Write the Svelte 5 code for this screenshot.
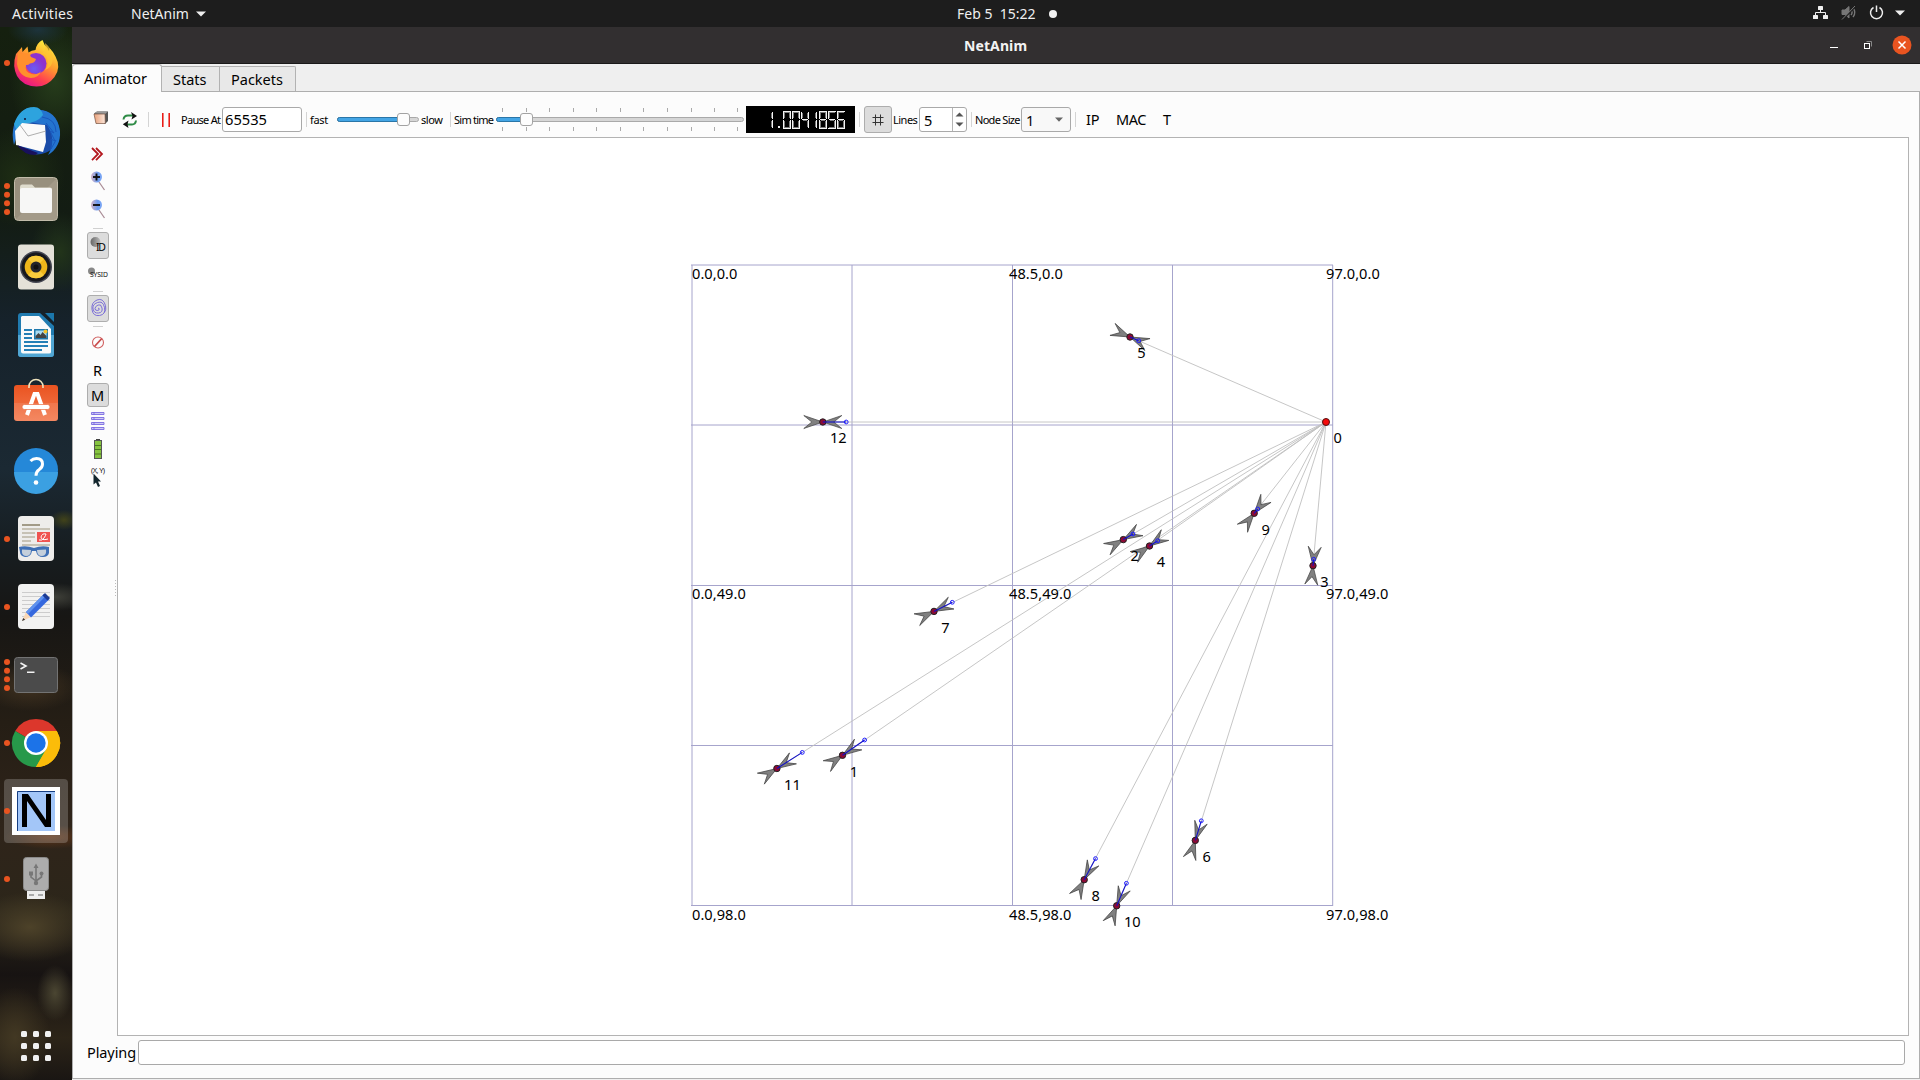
<script>
  // Positions on the animation canvas, in canvas pixels
  const OX = 118, OY = 138;
  const origin = { x: 1326, y: 422 };
  const nodes = [
    { id: 5, x: 1130, y: 337, ax: 1138.7, ay: 340.7 },
    { id: 12, x: 822.8, y: 422, ax: 846.2, ay: 422 },
    { id: 9, x: 1254.2, y: 513.3, ax: 1257.7, ay: 509 },
    { id: 2, x: 1123.3, y: 539.6, ax: 1133, ay: 534 },
    { id: 4, x: 1149.5, y: 546, ax: 1157.7, ay: 540.7 },
    { id: 3, x: 1313, y: 565.7, ax: 1313.7, ay: 559.3 },
    { id: 7, x: 934, y: 611.4, ax: 952.3, ay: 602.3 },
    { id: 11, x: 776.9, y: 768.5, ax: 802.3, ay: 752.4 },
    { id: 1, x: 842.5, y: 755.3, ax: 864.6, ay: 740 },
    { id: 8, x: 1084.2, y: 879.7, ax: 1095.5, ay: 858.6 },
    { id: 10, x: 1116.7, y: 905.8, ax: 1126.4, ay: 883.3 },
    { id: 6, x: 1195.3, y: 840.4, ax: 1201.3, ay: 820.8 }
  ].map((n) => ({ ...n, rot: (Math.atan2(origin.y - n.y, origin.x - n.x) * 180) / Math.PI }));

  const gx = [692, 852, 1012.5, 1172.5, 1332.7];
  const gy = [265, 425, 585.5, 745.5, 905.5];
  const labels = [];
  [['0.0', 279], ['49.0', 599], ['98.0', 920]].forEach(([v, y]) =>
    [['0.0', 692], ['48.5', 1009], ['97.0', 1326]].forEach(([h, x]) => {
      const text = h + ',' + v;
      labels.push({ text, x, y, w: (text.length - 2) * 8.5 + 2.8 });
    })
  );

  const ticks = [502, 526, 549, 573, 596, 620, 643, 667, 691, 714, 737];

  // Seven-segment display: [bright edge, shaded edge] for segments a-g
  const seg = {
    a: ['M0 .5H8', 'M1 1.500H7'], b: ['M7.500 1V8', 'M6.500 2V7'], c: ['M7.500 9V17', 'M6.500 10V16'],
    d: ['M0 17.500H8', 'M1 16.500H7'], e: ['M.5 9V17', 'M1.500 10V16'], f: ['M.5 1V8', 'M1.500 2V7'], g: ['M1 8.500H7', 'M2 9.500H6']
  };
  const shapes = { 0: 'abcdef', 1: 'bc', 4: 'bcfg', 5: 'acdfg', 6: 'acdefg', 8: 'abcdefg' };
  const lcd = [['1', 19], ['0', 37], ['0', 46], ['4', 55], ['1', 63], ['8', 73], ['5', 82], ['6', 91]];

  const dock = [
    ['firefox', 1], ['thunderbird', 0], ['files', 4], ['rhythmbox', 0], ['writer', 0], ['software', 0], ['help', 0],
    ['evince', 1], ['gedit', 1], ['terminal', 4], ['chrome', 1], ['netanim', 1], ['usb', 1]
  ];
  const dots = (n) => Array.from({ length: n }, (_, i) => 34 + (i - (n - 1) / 2) * 8.7);
</script>

<div class="screen">
  <header class="topbar">
    <span class="activities">Activities</span>
    <span class="appname">NetAnim</span>
    <svg class="tri" width="10" height="6"><path d="M0 .5H10L5 5.5z" fill="#eee" /></svg>
    <span class="clock">Feb 5&nbsp; 15:22</span>
    <i class="notif"></i>
    <svg class="status" width="96" height="16" viewBox="0 0 96 16">
      <g fill="#f0f0f0">
        <rect x="5" y="1" width="5" height="4" rx=".6" /><rect x="0" y="10" width="5" height="4" rx=".6" /><rect x="10" y="10" width="5" height="4" rx=".6" />
        <path d="M7.5 5V7.5M2.5 10V7.5H12.500V10" stroke="#f0f0f0" fill="none" />
        <path d="M82 5.500H92L87 10.500z" />
      </g>
      <g stroke="#777" fill="none"><path d="M29 5h3l4-3.500v11.500L32 9.500h-3z" fill="#777" /><path d="M38 5q2 2.500 0 5M40 3q3.500 4.500 0 9" stroke-width="1.500" /><path d="M30 14.500L43 1" stroke="#1d1d1d" stroke-width="1.500" /><path d="M29 14.500L42 1" /></g>
      <path d="M60.500 2.500a6 6 0 1 0 6 0M63.500 .5V7" stroke="#eee" stroke-width="1.500" fill="none" />
    </svg>
  </header>

  <div class="body">
    <nav class="dock">
      {#each dock as [name, count]}
        <svg class="slot" width="72" height="68" viewBox="0 0 72 68">
          {#if name === 'netanim'}<rect x="4" y="2" width="64" height="64" rx="4" fill="#fff" opacity=".2" />{/if}
          {#each dots(count) as y}<circle cx="7" cy={y} r="3" fill="#e95420" />{/each}
          {#if name === 'firefox'}
            <defs>
              <linearGradient id="ff" x1=".8" y1=".1" x2=".3" y2="1"><stop offset="0" stop-color="#ffe93b" /><stop offset=".4" stop-color="#ff9a2e" /><stop offset=".72" stop-color="#ff4150" /><stop offset="1" stop-color="#e5148c" /></linearGradient>
              <radialGradient id="fp" cx=".4" cy=".75"><stop offset="0" stop-color="#6a5cf4" /><stop offset="1" stop-color="#8d32cf" /></radialGradient>
            </defs>
            <path d="M16 25l6-7 .5 5 5-5.500 1 6q3-2.500 7-2.500q1-7 7-10q1.500 5 5 8l1.500 3 .5-3q4 4 6 8.500q6 11-1 20.500q-7 9.500-18 9.500q-14-.5-19.500-10.500-5-10-1-22z" fill="url(#ff)" />
            <circle cx="36" cy="34.500" r="10.500" fill="url(#fp)" />
            <path d="M18 23l5 2q6-3 8 3l5 2q-1 4-6 4.500q-2 2-4 1.500q-2 7 6 9q6 1 9-3q-2 7-10 7q-12-1-14-14z" fill="#ff902d" /><path d="M40 25q5-1 7 4q2 7-2 12q10-4 7-16q-1-6-7-11q2 10-5 11z" fill="#ffc534" opacity=".7" />
          {:else if name === 'thunderbird'}
            <circle cx="37" cy="35" r="22.500" fill="#194ba8" />
            <path d="M14 48Q9 27 23 14Q29 8 38 13Q57 13 60 34Q61 50 48 58Q57 43 47 28L29 25L20 28z" fill="#2474cf" />
            <path d="M14 27Q20 10 34 10Q41 10 43 18Q37 26 24 27L18 37z" fill="#2da3de" />
            <path d="M15 34L22 26L45 28L46 45L43 55L16 48z" fill="#fafafa" /><path d="M20 28L28 39L46 34" fill="none" stroke="#999" stroke-width=".8" />
            <path d="M17 48L38 56L35 58Q24 58 17 48z" fill="#18105d" /><circle cx="25" cy="22" r="1" fill="#113" />
            <path d="M46 26l8 10-4-2 5 10-4-2v10l5-9M42 20q14 2 14 15" stroke="#1957bc" fill="none" />
          {:else if name === 'files'}
            <rect x="14.500" y="12.500" width="43" height="43" rx="4" fill="#98907e" stroke="#c2bcaa" /><path d="M15 55L57 13v39q0 3-3 3z" fill="#aaa28f" opacity=".6" />
            <path d="M20 22q0-2.500 2-2.500h10l3 3h15q2 0 2 2v20H20z" fill="#dfdccd" /><rect x="20" y="23" width="32" height="25" rx="2" fill="#f7f7f6" />
          {:else if name === 'rhythmbox'}
            <rect x="18" y="11.500" width="36" height="45" rx="3" fill="#e4e1d8" /><circle cx="36" cy="34" r="16" fill="#444651" /><circle cx="36" cy="34" r="14.500" fill="#17181d" /><circle cx="36" cy="34" r="11.300" fill="#eeb51a" /><path d="M36 34l-8-8a11.300 11.300 0 0 1 16 0zM36 34l8 8a11.300 11.300 0 0 1-16 0z" fill="#f9cc3c" /><circle cx="36" cy="34" r="5.500" fill="#24252b" /><circle cx="36" cy="34" r="2.500" fill="#111" />
          {:else if name === 'writer'}
            <path d="M21 12H40L54 25V53q0 3-3 3H21q-3 0-3-3V15q0-3 3-3z" fill="#207bb0" /><path d="M18 34H54V53q0 3-3 3H21q-3 0-3-3z" fill="#51a6d3" /><path d="M45 12h9v9z" fill="#1b77ab" />
            <path d="M22 15H39L51 28V51q0 1.500-2 1.500H23q-2 0-2-2V16z" fill="#fafafa" />
            <path d="M24 29h8M24 33h8M24 37h8M24 41h24M24 45h24M24 49h18" stroke="#247fb6" stroke-width="2" /><rect x="34" y="28" width="14" height="10.500" fill="#1d78ad" /><rect x="35.500" y="29.500" width="11" height="7.500" fill="#a9dbf2" /><path d="M35.500 37v-2l3-3 2 2 2-3 4 4v2z" fill="#444" /><circle cx="45.500" cy="30.500" r="2" fill="#f5c42c" />
          {:else if name === 'software'}
            <defs><linearGradient id="sw" x2="0" y2="1"><stop stop-color="#ea5320" /><stop offset="1" stop-color="#f37b50" /></linearGradient></defs>
            <rect x="14" y="16" width="44" height="36" rx="3" fill="url(#sw)" /><path d="M14 34H58V49q0 3-3 3H17q-3 0-3-3z" fill="#fff" opacity=".1" /><path d="M29 19v-1.500a7 7 0 0 1 14 0V19" stroke="#eee2bc" stroke-width="1.600" fill="none" />
            <path d="M27 46L34.500 25h3L45 46" stroke="#fff" stroke-width="4" fill="none" /><rect x="22" y="35.500" width="28" height="5" rx="2.500" fill="#fff" stroke="#ea6b41" stroke-width=".7" />
          {:else if name === 'help'}
            <circle cx="36" cy="33" r="22" fill="#2588d8" /><path d="M14 35H58A22 22 0 0 1 14 35z" fill="#3ba0e2" /><path d="M30.500 24q2.500-2.500 6-2.500 6 0 6 5.500 0 3.500-3.500 5.700-3 2-3 6" stroke="#fff" stroke-width="3" fill="none" /><circle cx="36" cy="45.500" r="2.300" fill="#fff" />
          {:else if name === 'evince'}
            <rect x="18" y="11" width="36" height="45" rx="4" fill="#eeedeb" /><path d="M22 20h18" stroke="#a29b88" stroke-width="2" /><path d="M22 24h28M22 28h13M22 32h13M22 36h9M22 40h28" stroke="#c7c2b5" stroke-width="2" /><rect x="37" y="27" width="13" height="10" fill="#ef5350" /><path d="M39 35q3 1 5-2t2-4q-4-1-5 3 0 4 7 2" stroke="#fff" fill="none" /><path d="M19 42q7-2 15 1q8-3 15-1v6q-1 4-6 4-6 0-7-6h-4q-1 6-7 6-5-1-5-5z" fill="#3e6fb5" /><path d="M22 44.500l9 .5q0 6-5 6t-4-6.500zM37 45l9-.5q1 6.500-4 6.500t-5-6z" fill="#c4cfdb" />
          {:else if name === 'gedit'}
            <rect x="18" y="11" width="36" height="45" rx="4" fill="#f2f2f1" /><path d="M22 19.500h28M22 23.500h28M22 27.500h28M22 31.500h28M22 35.500h28M22 39.500h28M22 43.500h28" stroke="#ccc" /><path d="M22 48l4-9 5 5z" fill="#f8d7b5" /><path d="M22 48l1.200-3 2 1.800z" fill="#333" /><path d="M26 39L44 21l5.500 5L31 44.500z" fill="#3568de" /><path d="M26 39L44 21l2 1.700L28 41z" fill="#5e92ee" /><path d="M42.500 22.500l2.500-2.500 5 5-2.500 2.500z" fill="#1b3b95" />
          {:else if name === 'terminal'}
            <rect x="14.500" y="16.500" width="43" height="35" rx="3" fill="#4b4b4b" stroke="#737373" /><path d="M20.500 22l5.500 3-5.500 3M27 31.200h7.500" stroke="#f3f3f3" stroke-width="1.600" fill="none" />
          {:else if name === 'chrome'}
            <path d="M36 34L15.200 22A24 24 0 0 1 56.800 22z" fill="#dc372c" /><path d="M36 34L56.800 22A24 24 0 0 1 36 58z" fill="#fbbc09" /><path d="M36 34L36 58A24 24 0 0 1 15.200 22z" fill="#27994a" /><path d="M36 22H56.800L46 40z" fill="#fbbc09" /><path d="M25.600 40L36 34L46.400 40L36 58z" fill="#27994a" /><path d="M46.400 40L36 58A24 24 0 0 0 56.800 22H44z" fill="#fbbc09" /><circle cx="36" cy="34" r="12" fill="#fff" /><circle cx="36" cy="34" r="9.700" fill="#1c73e8" />
          {:else if name === 'netanim'}
            <rect x="12" y="10" width="48" height="48" fill="#fff" /><rect x="17" y="14" width="38" height="40" fill="#a3c6f8" /><path d="M17.500 54V14.500H55" stroke="#173f83" fill="none" /><path d="M22 17h6l18 26V17h5v33h-6L27 24v26h-5z" fill="#000" />
          {:else if name === 'usb'}
            <rect x="27" y="46" width="18" height="8" fill="#eee" /><path d="M29 50h5M38 50h5" stroke="#aaa" stroke-width="2" /><rect x="23.500" y="12.500" width="25" height="33" rx="3" fill="#acacac" stroke="#8a8a8a" /><g stroke="#777" stroke-width="1.600" fill="none"><path d="M36 39V21M36 36l-5-4v-3M36 36l5.500-4v-3" /></g><path d="M33.500 23L36 18.500 38.500 23zM29 26.500h4v4h-4z" fill="#777" /><circle cx="41.500" cy="28.500" r="2" fill="#777" /><circle cx="36" cy="38" r="2.200" fill="#777" />
          {/if}
        </svg>
      {/each}
      <svg class="apps" width="30" height="30">
        {#each [0, 12, 24] as y}{#each [0, 12, 24] as x}<rect {x} {y} width="6" height="6" rx="1.500" fill="#f1f1f1" />{/each}{/each}
      </svg>
    </nav>

    <section class="window">
      <div class="titlebar">
        <span class="title">NetAnim</span>
        <svg class="winbtns" width="90" height="20" viewBox="0 0 90 20">
          <path d="M7 12.500h8" stroke="#fff" /><path d="M43.500 6.500h5v5" stroke="#888" fill="none" /><rect x="41.500" y="8.500" width="5" height="5" stroke="#fff" fill="none" /><circle cx="79" cy="10" r="9.500" fill="#e95420" /><path d="M75.500 6.500l7 7M82.500 6.500l-7 7" stroke="#fff" stroke-width="1.500" />
        </svg>
      </div>
      <div class="tabs">
        <div class="tab active">Animator</div>
        <div class="tab stats">Stats</div>
        <div class="tab packets">Packets</div>
      </div>

      <div class="page">
        <div class="toolbar">
          <svg class="open" width="16" height="16" viewBox="0 0 16 16">
            <defs><linearGradient id="bx"><stop stop-color="#e9a27c" /><stop offset="1" stop-color="#fbe6da" /></linearGradient></defs>
            <path d="M1 3.500L4 1.500H15V11L12 14z" fill="#555" /><path d="M1 3.500L4 1.500H15L12 4z" fill="#999" /><path d="M1 4h11l.3 9.500H3z" fill="url(#bx)" stroke="#75513f" stroke-width=".7" />
          </svg>
          <svg class="reload" width="16" height="16" viewBox="0 0 16 16"><path d="M1.500 7.500Q2 3.500 6 3.500h5M14 8.500Q13.500 12.500 10 12.500H5" stroke="#2e8b46" stroke-width="2" fill="none" /><path d="M9 0l6 4-5.500 3.500 1-3.500zM6.500 16L.8 12.200 6.500 8.500l-1 3.700z" fill="#111" /></svg>
          <i class="sep s1"></i>
          <svg class="pause" width="8" height="14"><path d="M.8 0V14M7.200 0V14" stroke="#e8120c" stroke-width="1.500" /></svg>
          <span class="small pauseat">Pause At</span>
          <div class="field pausefield">65535</div>
          <i class="sep s2"></i>
          <span class="small fast">fast</span>
          <div class="slider speed"><i class="fill"></i><i class="knob"></i></div>
          <span class="small slow">slow</span>
          <i class="sep s3"></i>
          <span class="small sim">Sim time</span>
          <svg class="simtime" width="248" height="27" viewBox="496 106 248 27">
            {#each ticks as t}<path d="M{t + 0.5} 108v4M{t + 0.5} 127v4" stroke="#aaa" />{/each}
            <rect x="496.500" y="117.500" width="247" height="4" rx="2" fill="#d6d6d6" stroke="#a9a9a9" /><rect x="496.500" y="117.500" width="28" height="4" rx="2" fill="#43a5e5" stroke="#2a76a8" /><rect x="520.500" y="113.500" width="12" height="12" rx="2.500" fill="#fdfdfd" stroke="#a3a3a3" />
          </svg>
          <svg class="lcd" width="109" height="27" viewBox="0 0 109 27">
            <rect width="109" height="27" fill="#000" />
            {#each lcd as [d, x]}
              <g transform="translate({x} 5)" fill="none">{#each shapes[d] as s}<path d={seg[s][1]} stroke="#7c7c7c" /><path d={seg[s][0]} stroke="#f4f4f4" />{/each}</g>
            {/each}
            <rect x="32" y="20" width="2" height="2" fill="#eee" />
          </svg>
          <i class="sep s4"></i>
          <div class="btn hash"><svg width="12" height="12"><path d="M.5 3.500h11M.5 8.500h11M3.500 .5v11M8.500 .5v11" stroke="#333" /></svg></div>
          <span class="small lines">Lines</span>
          <div class="field spin"><span>5</span><svg width="14" height="23"><path d="M.5 0V23" stroke="#b5b5b5" /><path d="M3.500 8.500h8L7.500 4.500zM3.500 14.500h8L7.500 18.500z" fill="#555" /></svg></div>
          <i class="sep s5"></i>
          <span class="small nsize">Node Size</span>
          <div class="field combo"><span>1</span><svg width="8" height="5"><path d="M0 .5h8L4 4.800z" fill="#666" /></svg></div>
          <i class="sep s6"></i>
          <span class="flat ip">IP</span><span class="flat mac">MAC</span><span class="flat t">T</span>
        </div>

        <div class="work">
          <aside class="tools">
            <svg width="44" height="30" viewBox="0 0 44 30"><path d="M19 10l6 6-6 6.200M23 10l6 6-6 6.200" fill="none" stroke="#b3181e" stroke-width="1.800" /></svg>
            {#each ['+', '-'] as z}
              <svg width="44" height="28" viewBox="0 0 44 28"><defs><linearGradient id="zg"><stop stop-color="#d3b3c5" /><stop offset=".6" stop-color="#6f9cf0" /><stop offset="1" stop-color="#7da8f5" /></linearGradient></defs><path d="M26 14L31.500 22" stroke="#a98b95" stroke-width="1.300" /><circle cx="23.500" cy="9" r="5.500" fill="url(#zg)" /><path d="M20 9h7" stroke="#111" stroke-width="1.900" />{#if z === '+'}<path d="M23.500 5.500v7" stroke="#111" stroke-width="1.900" />{/if}</svg>
            {/each}
            <i class="hsep h1"></i>
            <div class="btn side"><svg width="20" height="25" viewBox="0 0 20 25"><defs><linearGradient id="gb"><stop stop-color="#666" /><stop offset="1" stop-color="#bbb" /></linearGradient></defs><circle cx="7.500" cy="9" r="5" fill="url(#gb)" /><text x="8" y="18" font-size="10.500" textLength="10" fill="#000">ID</text></svg></div>
            <svg width="44" height="27" viewBox="0 0 44 27"><circle cx="18.500" cy="12" r="3.500" fill="#888" /><text x="17" y="18.200" font-size="6.800" textLength="18" fill="#111">SYSID</text></svg>
            <i class="hsep h2"></i>
            <div class="btn side"><svg width="20" height="25" viewBox="0 0 20 25"><path d="M10 12.500q1-1 1.200.5t-2 1.500-2.200-2 3-3.500 4 3-3.500 5-5.500-4 4.500-6.500 7 5-5 8-7.500-6 5-9.500 8.500 5.500q1 4-1 7" fill="none" stroke="#7264d6" stroke-width=".9" /></svg></div>
            <i class="hsep h3"></i>
            <svg width="44" height="25" viewBox="0 0 44 25"><circle cx="25" cy="11.500" r="5.500" fill="none" stroke="#d06060" stroke-width="1.100" /><path d="M21.500 15.500L28.800 7.500" stroke="#c94b4b" stroke-width="1.800" /></svg>
            <div class="letter">R</div>
            <div class="btn side m">M</div>
            <svg width="44" height="27" viewBox="0 0 44 27">{#each [5.5, 10.5, 15.5, 20.500] as y}<path d="M18.500 {y}h12.500v2H18.500zM21 {y - 0.5}v3" fill="#cfcaf5" stroke="#7a6ce0" stroke-width=".9" />{/each}</svg>
            <svg width="44" height="30" viewBox="0 0 44 30"><rect x="23" y="5" width="4" height="2" fill="#444" /><rect x="21.500" y="6.500" width="7" height="18" fill="#86c340" stroke="#555" /><path d="M22 11.500h6M22 15.500h6M22 20h6" stroke="#4a7520" /></svg>
            <svg width="44" height="30" viewBox="0 0 44 30"><text x="18" y="9" font-size="7.500" textLength="14" fill="#222">(X, Y)</text><path d="M20.500 9.500v11l2.500-2 2 4.500 2-1-2-4.500h3z" fill="#12252c" /></svg>
            <svg class="grip" width="2" height="18"><path d="M.5 0V18" stroke="#bbb" stroke-dasharray="1 2" /></svg>
          </aside>

          <div class="canvas">
            <svg width="1790" height="897" viewBox="{OX} {OY} 1790 897">
              <g stroke="#a6a4cc" stroke-width="1">
                {#each gx as x}<path d="M{x} 265V906" />{/each}
                {#each gy as y}<path d="M691 {y}H1333" />{/each}
              </g>
              {#each nodes as n}<path d="M{n.x} {n.y}L{origin.x} {origin.y}" stroke="#bfbfbf" stroke-width=".9" />{/each}
              {#each nodes as n}
                <path transform="translate({n.x} {n.y}) rotate({n.rot})" d="M0 0L19 -6.500L11 0L19 6.500L0 0L-19 6.500L-11 0L-19 -6.500z" fill="#808080" stroke="#444" stroke-width=".7" />
                <circle cx={n.x} cy={n.y} r="3.200" fill="#8b0a35" stroke="#222" />
                <path d="M{n.x} {n.y}L{n.ax} {n.ay}" stroke="#1210c8" stroke-width="1.100" /><circle cx={n.ax} cy={n.ay} r="1.900" fill="none" stroke="#1c1aff" />
              {/each}
              <circle cx={origin.x} cy={origin.y} r="3.500" fill="#f50a0a" stroke="#501010" />
              <g class="maptext">
                {#each labels as l}<text x={l.x} y={l.y} textLength={l.w}>{l.text}</text>{/each}
                {#each nodes as n}<text x={n.x + 7.2} y={n.y + 21.3}>{n.id}</text>{/each}
                <text x="1333.500" y="443">0</text>
              </g>
            </svg>
          </div>
        </div>

        <footer class="statusbar"><span>Playing</span><div class="field progress"></div></footer>
      </div>
    </section>
  </div>
</div>

<style>
  :global(body) { margin: 0; overflow: hidden; }
  .screen { width: 1920px; height: 1080px; display: flex; flex-direction: column; font-family: 'Noto Sans', sans-serif; font-size: 14.5px; color: #000; background: #111; }
  .screen * { box-sizing: border-box; }
  i { display: block; flex: none; }
  svg { display: block; flex: none; }
  span { white-space: nowrap; flex: none; }

  .topbar { height: 27px; background: #1d1d1d; color: #efefef; display: flex; align-items: center; font-size: 14px; flex: none; }
  .activities { margin-left: 12px; width: 119px; letter-spacing: .3px; }
  .appname { width: 65px; }
  .clock { margin-left: 751px; width: 92px; padding-bottom: 1px; }
  .notif { width: 8px; height: 8px; border-radius: 50%; background: #f2f2f2; }
  .status { margin-left: 756px; margin-top: -1px; }

  .body { flex: 1; display: flex; min-height: 0; }
  .dock {
    width: 72px; flex: none; display: flex; flex-direction: column; padding-top: 2px;
    background:
      radial-gradient(ellipse 30px 16px at 38px 3px, #1d333b, transparent),
      radial-gradient(ellipse 45px 60px at 55px 55px, #263c1b, transparent),
      radial-gradient(ellipse 45px 50px at 20px 150px, #1e2e14, transparent),
      radial-gradient(ellipse 30px 40px at 60px 225px, #22341a, transparent),
      radial-gradient(ellipse 14px 10px at 64px 493px, #41431a, transparent),
      radial-gradient(ellipse 35px 14px at 55px 570px, #3f4039, transparent),
      radial-gradient(ellipse 50px 24px at 30px 660px, #413220, transparent),
      radial-gradient(ellipse 45px 12px at 50px 810px, #5d3418, transparent),
      radial-gradient(ellipse 60px 35px at 30px 900px, #4d4229, transparent),
      radial-gradient(ellipse 18px 28px at 55px 966px, #4b4632, transparent),
      radial-gradient(ellipse 35px 50px at 15px 1010px, #423823, transparent),
      linear-gradient(#15200f, #131c13 18%, #16222b 28%, #1b2933 42%, #171d20 50%, #171614 56%, #251e15 66%, #2f241a 76%, #2c261a 84%, #171312 90%, #2c2418 96%, #1a1613);
  }
  .apps { margin: 118px 0 0 21px; }

  .window { flex: 1; display: flex; flex-direction: column; background: #efefef; }
  .titlebar { height: 37px; background: #322f30; border-bottom: 1px solid #1a1919; display: flex; align-items: center; color: #f3f3f3; flex: none; }
  .title { font-weight: 700; margin-left: 892px; width: 859px; font-size: 14px; letter-spacing: .1px; }
  .winbtns { flex: none; }
  .tabs { height: 28px; display: flex; align-items: flex-end; flex: none; background: #efefef; border-bottom: 1px solid #aeaeae; }
  .tab { height: 25px; border: 1px solid #b2b2b2; border-left: 0; border-bottom: 0; background: #e8e8e8; padding: 2px 0 0 12px; line-height: 20px; }
  .tab.active { width: 90px; height: 28px; background: #fcfcfc; border-left: 1px solid #b2b2b2; border-radius: 3px 3px 0 0; padding-top: 4px; padding-left: 11px; margin-bottom: -1px; line-height: 19px; letter-spacing: -.1px; }
  .stats { width: 58px; padding-left: 11px; }
  .packets { width: 76px; padding-left: 11px; border-radius: 0 2px 0 0; }
  .page { flex: 1; display: flex; flex-direction: column; background: #fcfcfc; border: 1px solid #aeaeae; border-top: 0; margin-bottom: 1px; min-height: 0; }

  .toolbar { height: 45px; padding-top: 10px; display: flex; align-items: center; flex: none; }
  .small { font-size: 11px; line-height: 16px; }
  .sep { width: 1px; height: 15px; background: #d4d4d4; }
  .open { margin-left: 20px; margin-top: -3px; }
  .reload { margin-left: 13px; }
  .s1 { margin-left: 10px; }
  .pause { margin-left: 13px; }
  .pauseat { margin-left: 11px; width: 41px; letter-spacing: -.7px; }
  .field { background: #fff; border: 1px solid #a9a9a9; border-radius: 3px; display: flex; align-items: center; line-height: 20px; padding-bottom: 2px; }
  .pausefield { width: 80px; height: 25px; padding-left: 2px; flex: none; font-size: 14.7px; }
  .s2 { margin-left: 4px; }
  .fast { margin-left: 3px; width: 27px; letter-spacing: -.3px; }
  .slider { width: 82px; height: 5px; border: 1px solid #a9a9a9; border-radius: 3px; background: #d6d6d6; position: relative; flex: none; }
  .fill { height: 5px; width: 64px; margin: -1px; background: #43a5e5; border: 1px solid #2a76a8; border-radius: 3px; }
  .knob { position: absolute; left: 59px; top: -5px; width: 13px; height: 13px; border: 1px solid #a3a3a3; border-radius: 3px; background: #fdfdfd; }
  .slow { margin-left: 2px; width: 29px; letter-spacing: -.4px; }
  .sim { margin-left: 3px; width: 42px; letter-spacing: -.75px; }
  .lcd { margin-left: 2px; }
  .s4 { margin-left: 4px; }
  .btn { background: #dcdcdc; border: 1px solid #adadad; border-radius: 3px; display: flex; align-items: center; justify-content: center; flex: none; }
  .hash { width: 28px; height: 27px; margin-left: 4px; }
  .lines { margin-left: 1px; width: 26px; letter-spacing: -.5px; }
  .spin { width: 48px; height: 25px; justify-content: space-between; padding: 0 0 0 4px; flex: none; }
  .s5 { margin-left: 4px; }
  .nsize { margin-left: 3px; width: 46px; letter-spacing: -.7px; }
  .combo { width: 50px; height: 25px; justify-content: space-between; padding: 0 7px 0 4px; background: #f8f8f8; flex: none; }
  .s6 { margin-left: 4px; }
  .flat { padding-bottom: 1px; }
  .ip { margin-left: 10px; width: 30px; letter-spacing: -.2px; }
  .mac { width: 47px; letter-spacing: -.4px; }

  .work { height: 899px; display: flex; flex: none; }
  .tools { width: 44px; padding-top: 1px; display: flex; flex-direction: column; align-items: center; flex: none; }
  .hsep { width: 10px; height: 1px; background: #d0d0d0; margin: 4px 0 3px 6px; }
  .h2 { margin: 5px 0 3px 6px; }
  .h3 { margin: 4px 0 4px 6px; }
  .side { width: 22px; height: 27px; margin-left: 5px; }
  .side.m { height: 24px; }
  .letter { height: 27px; line-height: 29px; padding-left: 5px; }
  .grip { margin: 86px 0 0 42px; }
  .canvas { width: 1792px; height: 899px; border: 1px solid #b3b3b3; background: #fff; flex: none; }
  .maptext { font-size: 14.6px; fill: #000; }

  .statusbar { display: flex; align-items: center; padding: 4px 0 0 14px; flex: none; }
  .statusbar span { width: 51px; letter-spacing: -.1px; padding-bottom: 2px; }
  .progress { width: 1767px; height: 25px; }
</style>
